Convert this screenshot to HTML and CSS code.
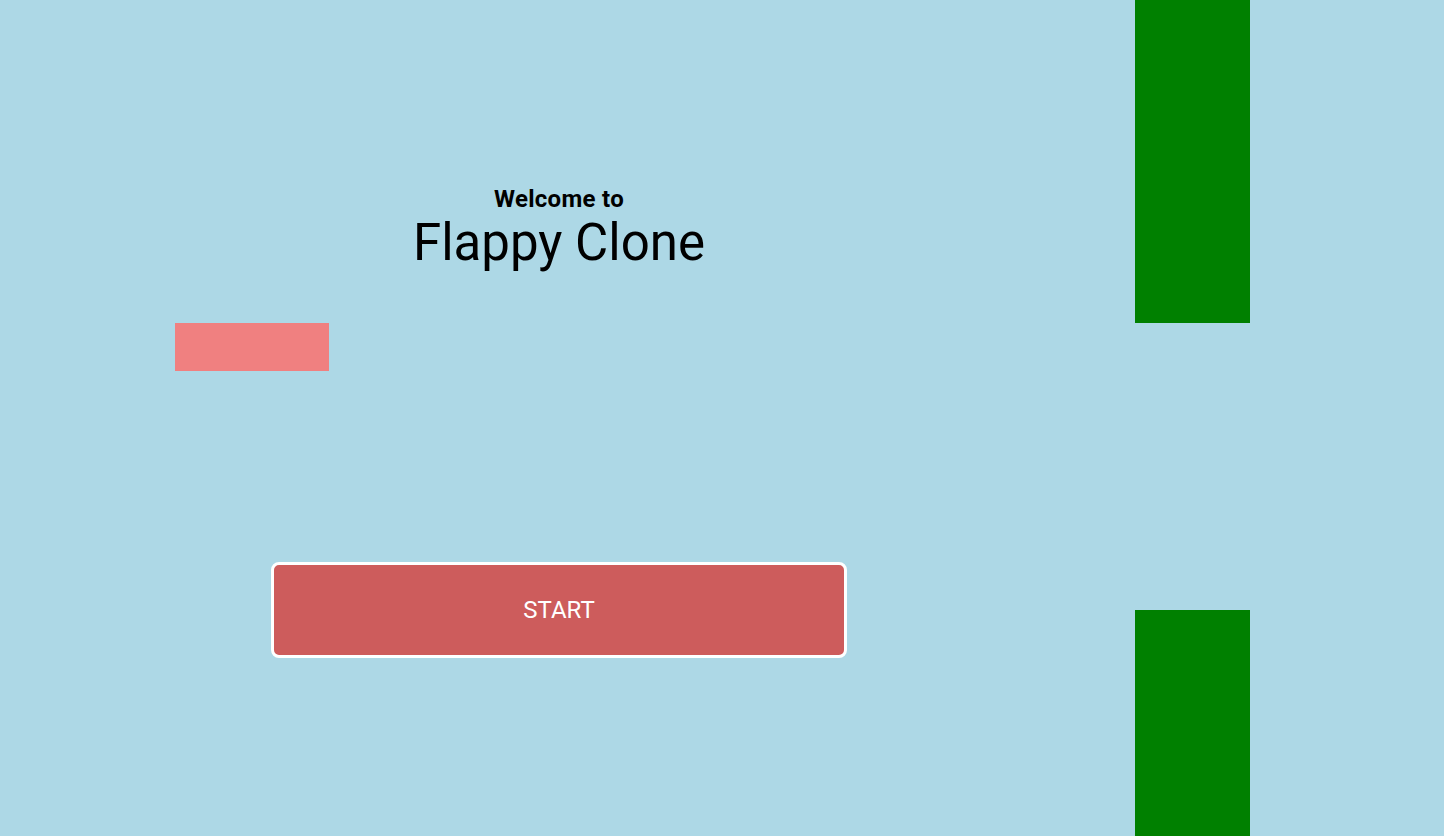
FILE: index.html
```html
<!DOCTYPE html>
<html>
<head>
<meta charset="utf-8">
<link rel="stylesheet" href="styles.css">
</head>
<body>
<div class="game">
  <div class="bird"></div>
  <div class="pipe pipe-top"></div>
  <div class="pipe pipe-bottom"></div>
  <div class="menu">
    <div class="welcome">Welcome to</div>
    <h1 class="title">Flappy Clone</h1>
    <button class="start">START</button>
  </div>
</div>
</body>
</html>
```
FILE: styles.css
```css
html, body {
  margin: 0;
  padding: 0;
  height: 100%;
}
body {
  background: #add8e6;
  font-family: "Roboto", "Liberation Sans", sans-serif;
  overflow: hidden;
}
.game {
  position: relative;
  width: 1444px;
  height: 836px;
}
.bird {
  position: absolute;
  left: 175px;
  top: 323px;
  width: 154px;
  height: 48px;
  background: #f08080;
}
.pipe {
  position: absolute;
  left: 1135px;
  width: 115px;
  background: #008000;
}
.pipe-top {
  top: 0;
  height: 323px;
}
.pipe-bottom {
  top: 610px;
  height: 226px;
}
.menu {
  position: absolute;
  left: 271px;
  top: 0;
  width: 576px;
  display: flex;
  flex-direction: column;
  align-items: center;
  padding-top: 184px;
}
.welcome {
  font-size: 24px;
  font-weight: 700;
  line-height: 30px;
  letter-spacing: 0.3px;
  color: #000;
}
.title {
  margin: 0;
  font-size: 51px;
  font-weight: 400;
  line-height: 57px;
  color: #000;
}
.start {
  margin-top: 291px;
  width: 576px;
  height: 96px;
  box-sizing: border-box;
  background: #cd5c5c;
  border: 3px solid #fff;
  border-radius: 8px;
  color: #fff;
  font-family: inherit;
  font-size: 24px;
  cursor: pointer;
}
```
